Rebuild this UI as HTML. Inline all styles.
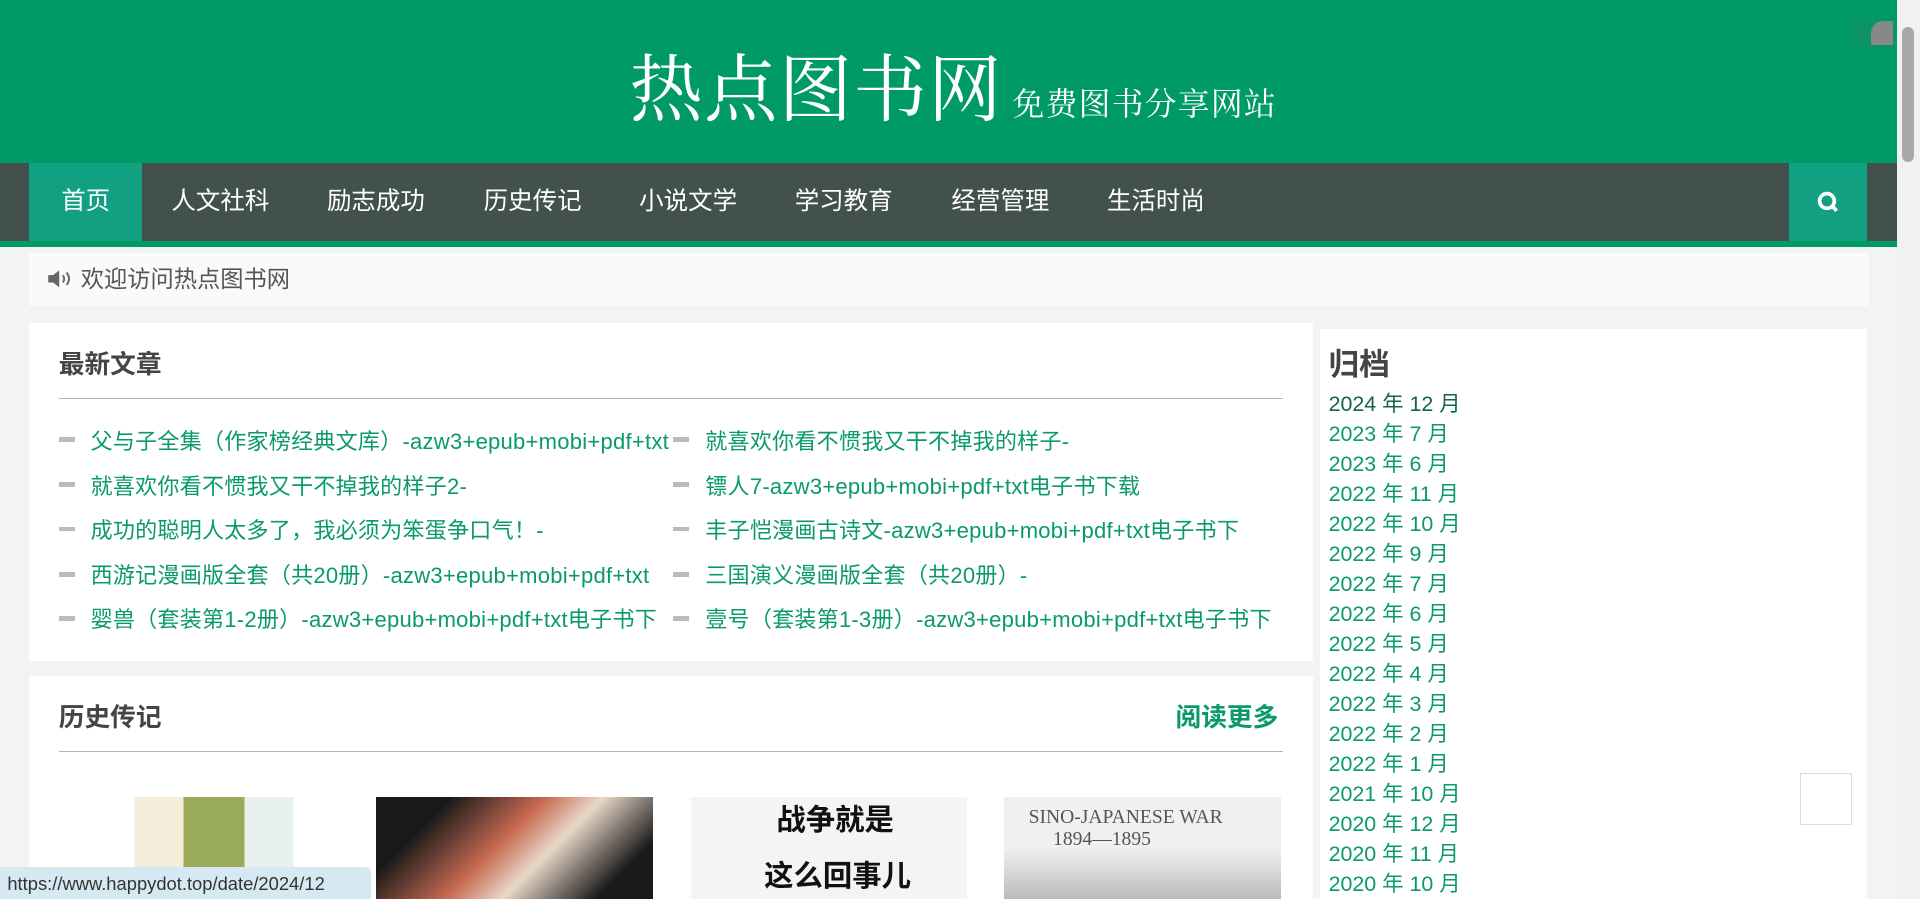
<!DOCTYPE html>
<html><head><meta charset="utf-8"><style>
html,body{margin:0;padding:0;overflow:hidden}
body{width:1568px;height:734px;zoom:1.22449;background:#f3f3f3;font-family:"Liberation Sans","Noto Sans CJK SC",sans-serif;position:relative}
.hdr{position:absolute;left:0;top:0;width:1549px;height:133px;background:#009a66}
.logo{position:absolute;left:514px;top:34px;color:#fff;font-family:"Noto Serif CJK SC",serif;font-size:60px;line-height:70px;letter-spacing:1px}
.logo small{font-size:26px;letter-spacing:1px;margin-left:8px}
.nav{position:absolute;left:0;top:133px;width:1549px;height:64px;background:#43514d;border-bottom:5px solid #009a66}
.nav a{position:absolute;top:0;height:64px;line-height:64px;color:#fff;font-size:20px;text-decoration:none}
.home{left:24px;width:92px;background:#12a083;text-align:center}
.srch{position:absolute;left:1461px;top:133px;width:64px;height:64px;background:#12a083}
.notice{position:absolute;left:24px;top:207px;width:1502px;height:43px;background:#fafafa;color:#555;font-size:19px;line-height:43px}
.box{position:absolute;background:#fff}
h3{margin:0;position:absolute;font-size:21px;color:#444}
.line{position:absolute;left:24px;width:1000px;height:1px;background:#a8b8b2}
.li{position:absolute;color:#0a9a6a;font-size:18px;white-space:nowrap;letter-spacing:0.2px}
.li:before{content:"";position:absolute;left:-26px;top:11px;width:13px;height:4px;background:#bbb}
.arch{position:absolute;left:1085px;color:#0a9a6a;font-size:17.5px;line-height:24.5px}
.cov{position:absolute;top:651px;height:83px;width:226px}
</style></head><body>
<div class="hdr"><div class="logo">热点图书网<small>免费图书分享网站</small></div></div>
<div style="position:absolute;left:1512px;top:16px;width:34px;height:22px;background:#0c9465"></div>
<div style="position:absolute;left:1528px;top:17px;width:18px;height:20px;background:#888;border-radius:10px 0 0 0"></div>
<div style="position:absolute;left:1549px;top:0;width:19px;height:734px;background:#f1f1f1"></div>
<div style="position:absolute;left:1553px;top:22px;width:10px;height:110px;background:#a8a8a8;border-radius:5px"></div>
<div class="nav">
<a class="home">首页</a>
<a style="left:140px">人文社科</a><a style="left:267px">励志成功</a><a style="left:395px">历史传记</a><a style="left:522px">小说文学</a><a style="left:649px">学习教育</a><a style="left:777px">经营管理</a><a style="left:904px">生活时尚</a>
</div>
<div class="srch"><svg width="64" height="64"><circle cx="31" cy="31" r="6" fill="none" stroke="#fff" stroke-width="3"/><line x1="35" y1="35" x2="39" y2="39" stroke="#fff" stroke-width="3"/></svg></div>
<div class="notice"><svg style="position:absolute;left:14px;top:13px" width="22" height="16" viewBox="0 0 22 16"><path d="M1 5h4l5-4v14l-5-4H1z" fill="#666"/><path d="M13 5q2 3 0 6M16 3q4 5 0 10" stroke="#666" stroke-width="1.6" fill="none"/></svg><span style="position:absolute;left:42px">欢迎访问热点图书网</span></div>
<div class="box" style="left:24px;top:264px;width:1048px;height:276px">
<h3 style="left:24px;top:17px">最新文章</h3>
<div class="line" style="top:61px"></div>
<div class="li" style="left:50px;top:82px">父与子全集（作家榜经典文库）-azw3+epub+mobi+pdf+txt</div>
<div class="li" style="left:552px;top:82px">就喜欢你看不惯我又干不掉我的样子-</div>
<div class="li" style="left:50px;top:119px">就喜欢你看不惯我又干不掉我的样子2-</div>
<div class="li" style="left:552px;top:119px">镖人7-azw3+epub+mobi+pdf+txt电子书下载</div>
<div class="li" style="left:50px;top:155px">成功的聪明人太多了，我必须为笨蛋争口气！-</div>
<div class="li" style="left:552px;top:155px">丰子恺漫画古诗文-azw3+epub+mobi+pdf+txt电子书下</div>
<div class="li" style="left:50px;top:192px">西游记漫画版全套（共20册）-azw3+epub+mobi+pdf+txt</div>
<div class="li" style="left:552px;top:192px">三国演义漫画版全套（共20册）-</div>
<div class="li" style="left:50px;top:228px">婴兽（套装第1-2册）-azw3+epub+mobi+pdf+txt电子书下</div>
<div class="li" style="left:552px;top:228px">壹号（套装第1-3册）-azw3+epub+mobi+pdf+txt电子书下</div>
</div>
<div class="box" style="left:24px;top:552px;width:1048px;height:182px">
<h3 style="left:24px;top:17px">历史传记</h3>
<h3 style="left:936px;top:17px;color:#0a9a6a">阅读更多</h3>
<div class="line" style="top:61px"></div>
</div>
<div class="cov" style="left:50px;background:linear-gradient(90deg,#fff 0 60px,#f4ecd8 60px 100px,#9aab5a 100px 150px,#e8f0f0 150px 190px,#fff 190px)"></div>
<div class="cov" style="left:307px;background:linear-gradient(135deg,#1a1a1a 20%,#c86a50 45%,#e8d8c8 60%,#1a1a1a 85%)"></div>
<div class="cov" style="left:564px;background:#f4f4f2"><div style="position:absolute;left:70px;top:0;font-size:24px;font-weight:bold;color:#111">战争就是</div><div style="position:absolute;left:60px;top:46px;font-size:24px;font-weight:bold;color:#111">这么回事儿</div></div>
<div class="cov" style="left:820px;background:linear-gradient(#f0f0f0 50%,#bbb)"><div style="position:absolute;left:20px;top:8px;font-family:'Liberation Serif',serif;font-size:16px;color:#555">SINO-JAPANESE WAR<br>&nbsp;&nbsp;&nbsp;&nbsp;&nbsp;1894—1895</div></div>
<div class="box" style="left:1078px;top:269px;width:447px;height:465px">
<h3 style="left:7px;top:8px;font-size:25px">归档</h3></div>
<div class="arch" style="top:318px"><span style="color:#116644">2024 年 12 月</span><br>2023 年 7 月<br>2023 年 6 月<br>2022 年 11 月<br>2022 年 10 月<br>2022 年 9 月<br>2022 年 7 月<br>2022 年 6 月<br>2022 年 5 月<br>2022 年 4 月<br>2022 年 3 月<br>2022 年 2 月<br>2022 年 1 月<br>2021 年 10 月<br>2020 年 12 月<br>2020 年 11 月<br>2020 年 10 月</div>
<div style="position:absolute;left:1470px;top:631px;width:41px;height:41px;border:1px solid #ddd;background:#fff"></div>
<div style="position:absolute;left:0;top:708px;width:303px;height:26px;background:#d6e8f2;border-radius:0 4px 0 0;font-size:15px;line-height:28px;color:#333;padding-left:6px;box-sizing:border-box">https://www.happydot.top/date/2024/12</div>
</body></html>
